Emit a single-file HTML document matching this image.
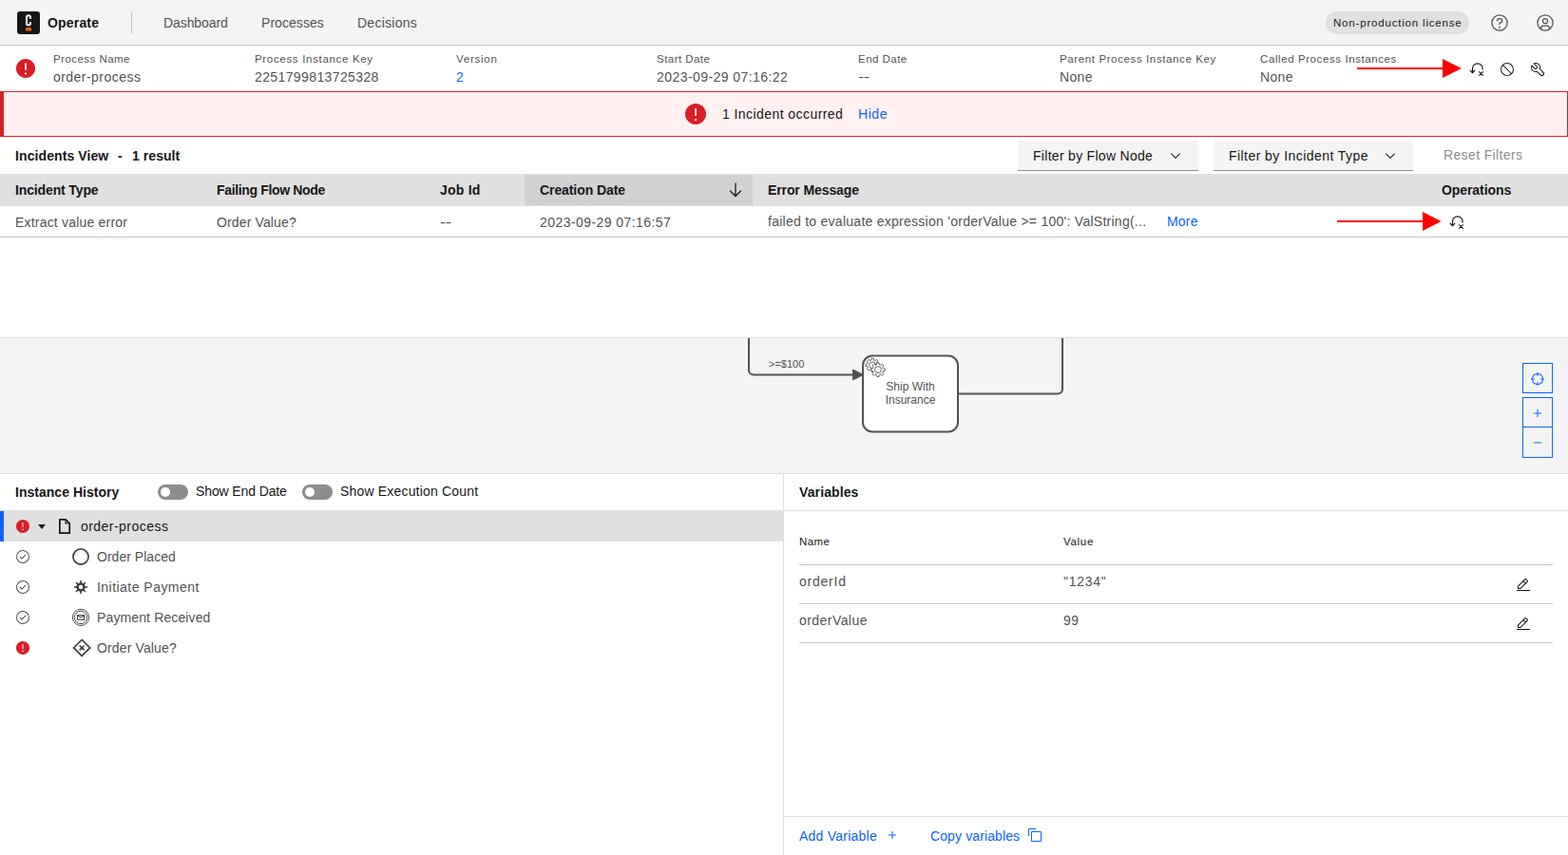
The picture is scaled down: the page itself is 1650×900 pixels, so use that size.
<!DOCTYPE html>
<html lang="en">
<head>
<meta charset="utf-8">
<title>Operate: Process Instance 2251799813725328 of order-process</title>
<style>
*{box-sizing:border-box;margin:0;padding:0}
html,body{width:1650px;height:900px;overflow:hidden;background:#fff}
body{font-family:"Liberation Sans",sans-serif;font-size:14px;color:#161616;position:relative;-webkit-font-smoothing:antialiased}
.abs{position:absolute}
svg{display:block}
a{color:#0f62fe;text-decoration:none}
.t{position:absolute;white-space:nowrap;line-height:18px;font-size:14px}
.b{font-weight:700}
.s{color:#525252}
.l{font-size:11.5px;line-height:16px;color:#525252}
.lk{color:#0f62fe}
/* header */
#hdr{left:0;top:0;width:1650px;height:48px;background:#f4f4f4;border-bottom:1px solid #c6c6c6}
#logo{left:18px;top:12px;width:24px;height:24px}
#hdiv{left:138px;top:12px;width:1px;height:24px;background:#c6c6c6}
#tag{left:1395px;top:12px;width:151px;height:24px;border-radius:12px;background:#e0e0e0}
/* instance header */
#ih{left:0;top:48px;width:1650px;height:48px;background:#fff}
/* banner */
#ban{left:0;top:96px;width:1650px;height:48px;background:#fff1f1;border:1px solid #da1e28;border-left-width:4px}
/* incidents */
.dd{top:148px;height:32px;background:#f4f4f4;border-bottom:1px solid #8d8d8d}
#th{left:0;top:183px;width:1650px;height:34px;background:#e0e0e0}
#ths{left:552px;top:184px;width:240px;height:32px;background:#d1d1d1}
#trb{left:0;top:249px;width:1650px;height:1px;background:#c6c6c6}
/* diagram */
#dg{left:0;top:355px;width:1650px;height:143px;background:#f4f4f4;border-top:1px solid #e0e0e0;overflow:hidden}
.zb{left:1602px;width:32px;height:32px;border:1px solid #0f62fe;background:#f4f4f4}
/* bottom */
#bot{left:0;top:498px;width:1650px;height:402px;background:#fff;border-top:1px solid #e0e0e0}
#vsep{left:824px;top:498px;width:1px;height:402px;background:#e0e0e0}
#sel{left:0;top:537px;width:824px;height:33px;background:#e0e0e0}
#selb{left:0;top:538px;width:4px;height:32px;background:#0f62fe}
.hl{height:1px;background:#e0e0e0}
.rl{left:841px;width:793px;height:1px;background:#c6c6c6}
.tg{top:510px;width:32px;height:16px;border-radius:8px;background:#8d8d8d}
.tg i{position:absolute;left:3px;top:3px;width:10px;height:10px;border-radius:5px;background:#fff}

.ic{position:absolute;display:block}
.d{fill:#161616}
.g{fill:#525252}
.r{fill:#da1e28}
.bl{fill:#0f62fe}
</style>
</head>
<body>
<header>
<div id="hdr" class="abs"></div>
<svg id="logo" class="abs" viewBox="0 0 24 24"><rect width="24" height="24" rx="3.2" fill="#161616"/><path d="M14 7.9V6.2a2 2 0 0 0-4 0v6.4a2 2 0 0 0 4 0V10.9" fill="none" stroke="#fff" stroke-width="1.9"/><rect x="9" y="17.1" width="6" height="3.4" fill="#fc5d0d"/></svg>
<div class="t b h" style="left:50px;top:15px;letter-spacing:0.18px">Operate</div>
<div id="hdiv" class="abs"></div>
<div class="t s h" style="left:172px;top:15px;letter-spacing:-0.088px">Dashboard</div>
<div class="t s h" style="left:275px;top:15px;letter-spacing:0.055px">Processes</div>
<div class="t s h" style="left:376px;top:15px;letter-spacing:0.262px">Decisions</div>
<div id="tag" class="abs"></div>
<div class="t" style="left:1403px;top:16px;font-size:11.5px;line-height:16px;letter-spacing:0.814px">Non-production license</div>

<svg class="ic g" style="left:1568px;top:14px" width="20" height="20" viewBox="0 0 32 32"><path d="M16,2A14,14,0,1,0,30,16,14,14,0,0,0,16,2Zm0,26A12,12,0,1,1,28,16,12,12,0,0,1,16,28Z"/><circle cx="16" cy="23.5" r="1.5"/><path d="M17,8H15.5A4.49,4.49,0,0,0,11,12.5V13h2v-.5A2.5,2.5,0,0,1,15.5,10H17a2.5,2.5,0,0,1,0,5H15v4.5h2V17a4.5,4.5,0,0,0,0-9Z"/></svg>
<svg class="ic g" style="left:1616px;top:14px" width="20" height="20" viewBox="0 0 32 32"><path d="M16,8a5,5,0,1,0,5,5A5,5,0,0,0,16,8Zm0,8a3,3,0,1,1,3-3A3.0034,3.0034,0,0,1,16,16Z"/><path d="M16,2A14,14,0,1,0,30,16,14.0158,14.0158,0,0,0,16,2ZM10,26.3765V25a3.0033,3.0033,0,0,1,3-3h6a3.0033,3.0033,0,0,1,3,3v1.3765a11.8989,11.8989,0,0,1-12,0Zm13.9925-1.4507A5.0016,5.0016,0,0,0,19,20H13a5.0016,5.0016,0,0,0-4.9925,4.9258,12,12,0,1,1,15.985,0Z"/></svg>

</header>
<main>
<section id="instance-header">
<div id="ih" class="abs"></div>
<div class="t l" style="left:56px;top:54px;letter-spacing:0.463px">Process Name</div>
<div class="t s" style="left:56px;top:72px;letter-spacing:0.462px">order-process</div>
<div class="t l" style="left:268px;top:54px;letter-spacing:0.676px">Process Instance Key</div>
<div class="t s" style="left:268px;top:72px;letter-spacing:0.388px">2251799813725328</div>
<div class="t l" style="left:480px;top:54px;letter-spacing:0.76px">Version</div>
<div class="t lk" style="left:480px;top:72px">2</div>
<div class="t l" style="left:691px;top:54px;letter-spacing:0.455px">Start Date</div>
<div class="t s" style="left:691px;top:72px;letter-spacing:0.438px">2023-09-29 07:16:22</div>
<div class="t l" style="left:903px;top:54px;letter-spacing:0.47px">End Date</div>
<div class="t s nofit" style="left:903px;top:72px;transform:scaleX(1.3);transform-origin:0 0">--</div>
<div class="t l" style="left:1115px;top:54px;letter-spacing:0.616px">Parent Process Instance Key</div>
<div class="t s" style="left:1115px;top:72px;letter-spacing:0.337px">None</div>
<div class="t l" style="left:1326px;top:54px;letter-spacing:0.591px">Called Process Instances</div>
<div class="t s" style="left:1326px;top:72px;letter-spacing:0.337px">None</div>

<svg class="ic r" style="left:16px;top:61px" width="22" height="22" viewBox="0 0 24 24"><path d="M12,1C6,1,1,6,1,12s5,11,11,11s11-5,11-11S18,1,12,1z M11.1,6h1.8v8h-1.8V6z M12,19.2c-0.7,0-1.2-0.6-1.2-1.2s0.6-1.2,1.2-1.2s1.2,0.6,1.2,1.2S12.7,19.2,12,19.2z"/></svg>
<svg class="ic" style="left:1428px;top:62px" width="110" height="20" viewBox="0 0 110 20"><path d="M0 10H90" stroke="#ff0000" stroke-width="2" fill="none"/><path d="M90 0L110 10L90 20Z" fill="#ff0000"/></svg>
<svg class="ic d" style="left:1546px;top:65px" width="16" height="16" viewBox="0 0 16 16"><path d="M3.5 11.6V7.2a5.3 5.3 0 0 1 10.6 0V8.6" fill="none" stroke="#161616" stroke-width="1.15"/><path d="M0.9 9L3.5 11.6 6.1 9M10.3 10.3l4.4 4.4M14.7 10.3l-4.4 4.4" fill="none" stroke="#161616" stroke-width="1.15"/></svg>
<svg class="ic d" style="left:1578px;top:65px" width="16" height="16" viewBox="0 0 32 32"><path d="M2,16H2A14,14,0,1,0,16,2,14,14,0,0,0,2,16Zm23.15,7.75L8.25,6.85a12,12,0,0,1,16.9,16.9ZM8.24,25.16A12,12,0,0,1,6.84,8.27L23.73,25.16a12,12,0,0,1-15.49,0Z"/></svg>
<svg class="ic d" style="left:1610px;top:65px" width="16" height="16" viewBox="0 0 32 32"><path d="M12.1,2A9.8,9.8,0,0,0,6.7,3.6L13.1,10a2.1,2.1,0,0,1,.2,3,2.1,2.1,0,0,1-3-.2L3.7,6.4A9.84,9.84,0,0,0,2,12.1,10.14,10.14,0,0,0,12.1,22.2a10.9,10.9,0,0,0,2.6-.3l6.7,6.7a5,5,0,0,0,7.1-7.1l-6.7-6.7a10.9,10.9,0,0,0,.3-2.6A10,10,0,0,0,12.1,2Zm8,10.1a7.61,7.61,0,0,1-.3,2.1l-.3,1.1.8.8,6.7,6.7a2.88,2.88,0,0,1,.9,2.1A2.72,2.72,0,0,1,27,27a2.9,2.9,0,0,1-4.2,0l-6.7-6.7-.8-.8-1.1.3a7.61,7.61,0,0,1-2.1.3,8.27,8.27,0,0,1-5.7-2.3A7.63,7.63,0,0,1,4,12.1a8.33,8.33,0,0,1,.3-2.2l4.4,4.4a4.14,4.14,0,0,0,5.9.2,4.14,4.14,0,0,0-.2-5.9L10,4.2a6.45,6.45,0,0,1,2-.3,8.27,8.27,0,0,1,5.7,2.3A8.49,8.49,0,0,1,20.1,12.1Z"/></svg>

</section>
<section id="incident-banner">
<div id="ban" class="abs"></div>
<div class="t" style="left:760px;top:111px;letter-spacing:0.433px">1 Incident occurred</div>
<div class="t lk" style="left:903px;top:111px;letter-spacing:0.561px">Hide</div>

<svg class="ic r" style="left:720px;top:108px" width="24" height="24" viewBox="0 0 24 24"><path d="M12,1C6,1,1,6,1,12s5,11,11,11s11-5,11-11S18,1,12,1z M11.1,6h1.8v8h-1.8V6z M12,19.2c-0.7,0-1.2-0.6-1.2-1.2s0.6-1.2,1.2-1.2s1.2,0.6,1.2,1.2S12.7,19.2,12,19.2z"/></svg>

</section>
<section id="incidents">
<div class="t b" style="left:16px;top:155px;letter-spacing:0.092px">Incidents View</div>
<div class="t b nofit" style="left:124px;top:155px">-</div>
<div class="t b" style="left:139px;top:155px;letter-spacing:0.055px">1 result</div>
<div class="abs dd" style="left:1071px;width:190px"></div>
<div class="t" style="left:1087px;top:155px;letter-spacing:0.294px">Filter by Flow Node</div>
<div class="abs dd" style="left:1277px;width:210px"></div>
<div class="t" style="left:1293px;top:155px;letter-spacing:0.446px">Filter by Incident Type</div>
<div class="t" style="left:1519px;top:154px;color:#8d8d8d;letter-spacing:0.362px">Reset Filters</div>
<div id="th" class="abs"></div>
<div id="ths" class="abs"></div>
<div class="t b" style="left:16px;top:191px;letter-spacing:-0.134px">Incident Type</div>
<div class="t b" style="left:228px;top:191px;letter-spacing:-0.349px">Failing Flow Node</div>
<div class="t b" style="left:463px;top:191px;letter-spacing:0.233px">Job Id</div>
<div class="t b" style="left:568px;top:191px;letter-spacing:-0.086px">Creation Date</div>
<div class="t b" style="left:808px;top:191px;letter-spacing:-0.107px">Error Message</div>
<div class="t b" style="left:1517px;top:191px;letter-spacing:-0.078px">Operations</div>
<div class="t s" style="left:16px;top:225px;letter-spacing:0.195px">Extract value error</div>
<div class="t s" style="left:228px;top:225px;letter-spacing:0.139px">Order Value?</div>
<div class="t s nofit" style="left:463px;top:225px;transform:scaleX(1.3);transform-origin:0 0">--</div>
<div class="t s" style="left:568px;top:225px;letter-spacing:0.438px">2023-09-29 07:16:57</div>
<div class="t s" style="left:808px;top:224px;letter-spacing:0.263px">failed to evaluate expression 'orderValue &gt;= 100': ValString(...</div>
<div class="t lk" style="left:1228px;top:224px;letter-spacing:0.191px">More</div>
<div id="trb" class="abs"></div>

<svg class="ic d" style="left:1229px;top:156px" width="16" height="16" viewBox="0 0 16 16"><path d="M8 11L3 6 3.7 5.3 8 9.6 12.3 5.3 13 6z"/></svg>
<svg class="ic d" style="left:1455px;top:156px" width="16" height="16" viewBox="0 0 16 16"><path d="M8 11L3 6 3.7 5.3 8 9.6 12.3 5.3 13 6z"/></svg>
<svg class="ic d" style="left:764px;top:190px" width="20" height="20" viewBox="0 0 32 32"><path d="M24.59 16.59L17 24.17 17 4 15 4 15 24.17 7.41 16.59 6 18 16 28 26 18 24.59 16.59z"/></svg>
<svg class="ic" style="left:1407px;top:223px" width="110" height="20" viewBox="0 0 110 20"><path d="M0 10H90" stroke="#ff0000" stroke-width="2" fill="none"/><path d="M90 0L109.6 10L90 20Z" fill="#ff0000"/></svg>
<svg class="ic d" style="left:1525px;top:226px" width="16" height="16" viewBox="0 0 16 16"><path d="M3.5 11.6V7.2a5.3 5.3 0 0 1 10.6 0V8.6" fill="none" stroke="#161616" stroke-width="1.15"/><path d="M0.9 9L3.5 11.6 6.1 9M10.3 10.3l4.4 4.4M14.7 10.3l-4.4 4.4" fill="none" stroke="#161616" stroke-width="1.15"/></svg>

</section>
<section id="diagram">
<div id="dg" class="abs"></div>
<svg class="ic" style="left:0;top:356px" width="1650" height="142" viewBox="0 356 1650 142">
<g fill="none" stroke="#525252" stroke-width="2" stroke-linejoin="round">
<path d="M788 350V389.5a5 5 0 0 0 5 5H898"/>
<path d="M1009 414.5H1113a5 5 0 0 0 5-5V350"/>
</g>
<path d="M897.5 389L908.5 394.5L897.5 400Z" fill="#525252" stroke="#525252" stroke-width="1" stroke-linejoin="round"/>
<rect x="908" y="374.5" width="100" height="80" rx="10" fill="#fff" stroke="#525252" stroke-width="2"/>
<g fill="#fff" stroke="#525252" stroke-width="0.9" stroke-linejoin="round">
<path d="M925.32 383.23L925.32 385.37L923.54 385.63L922.91 387.14L923.99 388.58L922.48 390.09L921.04 389.01L919.53 389.64L919.27 391.42L917.13 391.42L916.87 389.64L915.36 389.01L913.92 390.09L912.41 388.58L913.49 387.14L912.86 385.63L911.08 385.37L911.08 383.23L912.86 382.97L913.49 381.46L912.41 380.02L913.92 378.51L915.36 379.59L916.87 378.96L917.13 377.18L919.27 377.18L919.53 378.96L921.04 379.59L922.48 378.51L923.99 380.02L922.91 381.46L923.54 382.97Z"/>
<circle cx="918.2" cy="384.3" r="3.5"/>
<path d="M931.22 388.10L931.22 390.30L929.33 390.55L928.70 392.09L929.85 393.60L928.30 395.15L926.79 394.00L925.25 394.63L925.00 396.52L922.80 396.52L922.55 394.63L921.01 394.00L919.50 395.15L917.95 393.60L919.10 392.09L918.47 390.55L916.58 390.30L916.58 388.10L918.47 387.85L919.10 386.31L917.95 384.80L919.50 383.25L921.01 384.40L922.55 383.77L922.80 381.88L925.00 381.88L925.25 383.77L926.79 384.40L928.30 383.25L929.85 384.80L928.70 386.31L929.33 387.85Z"/>
<circle cx="923.9" cy="389.2" r="3.5"/>
</g>
<text x="809" y="387" font-family="'Liberation Sans',Arial,sans-serif" font-size="11" fill="#525252">&gt;=$100</text>
<text x="958" y="411" text-anchor="middle" font-family="'Liberation Sans',Arial,sans-serif" font-size="12" fill="#525252">Ship With</text>
<text x="958" y="425" text-anchor="middle" font-family="'Liberation Sans',Arial,sans-serif" font-size="12" fill="#525252">Insurance</text>
</svg>
<div class="abs zb" style="top:382px"></div>
<div class="abs zb" style="top:418px;height:64px"></div>
<div class="abs" style="left:1602px;top:449px;width:32px;height:1px;background:#0f62fe"></div>
<svg class="ic bl" style="left:1610px;top:391px" width="16" height="16" viewBox="0 0 32 32"><path d="M30 15H27.9492A12.0071 12.0071 0 0017 4.0508V2H15V4.0508A12.0071 12.0071 0 004.0508 15H2v2H4.0508A12.0071 12.0071 0 0015 27.9492V30h2V27.9492A12.0071 12.0071 0 0027.9492 17H30zM17 25.9492V22H15v3.9492A10.0166 10.0166 0 016.0508 17H10V15H6.0508A10.0166 10.0166 0 0115 6.0508V10h2V6.0508A10.0166 10.0166 0 0125.9492 15H22v2h3.9492A10.0166 10.0166 0 0117 25.9492z"/></svg>
<svg class="ic bl" style="left:1610px;top:427px" width="16" height="16" viewBox="0 0 32 32"><path d="M17 15L17 8 15 8 15 15 8 15 8 17 15 17 15 24 17 24 17 17 24 17 24 15z"/></svg>
<svg class="ic bl" style="left:1610px;top:458px" width="16" height="16" viewBox="0 0 32 32"><path d="M8 15H24V17H8z"/></svg>

</section>
<section id="bottom-panel">
<div id="bot" class="abs"></div>
<div id="vsep" class="abs"></div>
<div class="t b" style="left:16px;top:509px;letter-spacing:0.024px">Instance History</div>
<div class="abs tg" style="left:166px"><i></i></div>
<div class="t" style="left:206px;top:508px;letter-spacing:-0.115px">Show End Date</div>
<div class="abs tg" style="left:318px"><i></i></div>
<div class="t" style="left:358px;top:508px;letter-spacing:0.179px">Show Execution Count</div>
<div id="sel" class="abs"></div>
<div id="selb" class="abs"></div>
<svg class="ic r" style="left:16px;top:546px" width="16" height="16" viewBox="0 0 16 16"><path d="M8,1C4.2,1,1,4.2,1,8s3.2,7,7,7s7-3.1,7-7S11.9,1,8,1z M7.5,4h1v5h-1V4z M8,12.2c-0.4,0-0.8-0.4-0.8-0.8s0.3-0.8,0.8-0.8c0.4,0,0.8,0.4,0.8,0.8S8.4,12.2,8,12.2z"/></svg>
<svg class="ic d" style="left:40px;top:552px" width="8" height="5" viewBox="0 0 8 5"><path d="M0 0H8L4 5Z"/></svg>
<svg class="ic" style="left:60px;top:544px" width="16" height="20" viewBox="0 0 16 20" fill="none" stroke="#161616" stroke-width="1.7"><path d="M2.85 2.85H9.1L13.25 7V17.1H2.85Z"/><path d="M9.1 2.85V7H13.25" stroke-width="1.2"/></svg>
<svg class="ic g" style="left:16px;top:578px" width="16" height="16" viewBox="0 0 32 32"><path d="M14 21.414L9 16.413 10.413 15 14 18.586 21.585 11 23 12.415 14 21.414z"/><path d="M16,2A14,14,0,1,0,30,16,14,14,0,0,0,16,2Zm0,26A12,12,0,1,1,28,16,12,12,0,0,1,16,28Z"/></svg>
<svg class="ic" style="left:75px;top:576px" width="20" height="20" viewBox="0 0 20 20"><circle cx="10" cy="10" r="8.05" fill="none" stroke="#404040" stroke-width="1.7"/></svg>
<svg class="ic g" style="left:16px;top:610px" width="16" height="16" viewBox="0 0 32 32"><path d="M14 21.414L9 16.413 10.413 15 14 18.586 21.585 11 23 12.415 14 21.414z"/><path d="M16,2A14,14,0,1,0,30,16,14,14,0,0,0,16,2Zm0,26A12,12,0,1,1,28,16,12,12,0,0,1,16,28Z"/></svg>
<svg class="ic" style="left:77px;top:610px" width="16" height="16" viewBox="0 0 16 16"><path d="M15.06 7.28L15.06 8.72L12.63 8.81L11.85 10.70L13.51 12.48L12.48 13.51L10.70 11.85L8.81 12.63L8.72 15.06L7.28 15.06L7.19 12.63L5.30 11.85L3.52 13.51L2.49 12.48L4.15 10.70L3.37 8.81L0.94 8.72L0.94 7.28L3.37 7.19L4.15 5.30L2.49 3.52L3.52 2.49L5.30 4.15L7.19 3.37L7.28 0.94L8.72 0.94L8.81 3.37L10.70 4.15L12.48 2.49L13.51 3.52L11.85 5.30L12.63 7.19ZM8 5.7a2.3 2.3 0 1 0 0 4.6a2.3 2.3 0 1 0 0-4.6Z" fill="#393939" fill-rule="evenodd"/></svg>
<svg class="ic g" style="left:16px;top:642px" width="16" height="16" viewBox="0 0 32 32"><path d="M14 21.414L9 16.413 10.413 15 14 18.586 21.585 11 23 12.415 14 21.414z"/><path d="M16,2A14,14,0,1,0,30,16,14,14,0,0,0,16,2Zm0,26A12,12,0,1,1,28,16,12,12,0,0,1,16,28Z"/></svg>
<svg class="ic" style="left:75px;top:640px" width="20" height="20" viewBox="0 0 20 20" fill="none" stroke="#393939"><circle cx="10" cy="9.9" r="8.6" stroke-width="0.9"/><circle cx="10" cy="9.9" r="6.7" stroke-width="0.9"/><rect x="6.5" y="7.7" width="7" height="4.6" stroke-width="1.1"/><path d="M6.7 8L10 10.2L13.3 8" stroke-width="1"/></svg>
<svg class="ic r" style="left:16px;top:674px" width="16" height="16" viewBox="0 0 16 16"><path d="M8,1C4.2,1,1,4.2,1,8s3.2,7,7,7s7-3.1,7-7S11.9,1,8,1z M7.5,4h1v5h-1V4z M8,12.2c-0.4,0-0.8-0.4-0.8-0.8s0.3-0.8,0.8-0.8c0.4,0,0.8,0.4,0.8,0.8S8.4,12.2,8,12.2z"/></svg>
<svg class="ic" style="left:76px;top:672px" width="20" height="20" viewBox="0 0 20 20" fill="none" stroke="#393939"><path d="M10.1 1.4L18.7 9.9L10.1 18.4L1.6 9.9Z" stroke-width="1.8" stroke="#454545"/><path d="M7.6 7.5L12.6 12.3M12.6 7.5L7.6 12.3" stroke-width="1.6"/></svg>
<div class="t" style="left:85px;top:545px;letter-spacing:0.462px">order-process</div>
<div class="t s" style="left:102px;top:577px;letter-spacing:0.025px">Order Placed</div>
<div class="t s" style="left:102px;top:609px;letter-spacing:0.467px">Initiate Payment</div>
<div class="t s" style="left:102px;top:641px;letter-spacing:0.126px">Payment Received</div>
<div class="t s" style="left:102px;top:673px;letter-spacing:0.139px">Order Value?</div>

<div class="t b" style="left:841px;top:509px;letter-spacing:0.112px">Variables</div>
<div class="abs hl" style="left:825px;top:537px;width:825px"></div>
<div class="t" style="left:841px;top:562px;font-size:11.5px;line-height:16px;letter-spacing:0.424px">Name</div>
<div class="t" style="left:1119px;top:562px;font-size:11.5px;line-height:16px;letter-spacing:0.679px">Value</div>
<div class="abs rl" style="top:594px"></div>
<div class="t s" style="left:841px;top:603px;letter-spacing:0.767px">orderId</div>
<div class="t s" style="left:1119px;top:603px;letter-spacing:0.741px">"1234"</div>
<div class="abs rl" style="top:635px"></div>
<div class="t s" style="left:841px;top:644px;letter-spacing:0.443px">orderValue</div>
<div class="t s" style="left:1119px;top:644px;letter-spacing:0.582px">99</div>
<div class="abs rl" style="top:676px"></div>
<div class="abs hl" style="left:825px;top:859px;width:825px"></div>
<div class="t lk" style="left:841px;top:871px;letter-spacing:0.238px">Add Variable</div>
<div class="t lk" style="left:979px;top:871px;letter-spacing:0.113px">Copy variables</div>
<svg class="ic d" style="left:1595px;top:608px" width="16" height="16" viewBox="0 0 32 32"><path d="M2 26H30V28H2zM25.4 9c.8-.8.8-2 0-2.8 0 0 0 0 0 0l-3.6-3.6c-.8-.8-2-.8-2.8 0 0 0 0 0 0 0l-15 15V24h6.4L25.4 9zM20.4 4L24 7.6l-3 3L17.4 7 20.4 4zM6 22v-3.6l10-10 3.6 3.6-10 10H6z"/></svg>
<svg class="ic d" style="left:1595px;top:649px" width="16" height="16" viewBox="0 0 32 32"><path d="M2 26H30V28H2zM25.4 9c.8-.8.8-2 0-2.8 0 0 0 0 0 0l-3.6-3.6c-.8-.8-2-.8-2.8 0 0 0 0 0 0 0l-15 15V24h6.4L25.4 9zM20.4 4L24 7.6l-3 3L17.4 7 20.4 4zM6 22v-3.6l10-10 3.6 3.6-10 10H6z"/></svg>
<svg class="ic bl" style="left:931px;top:871px" width="16" height="16" viewBox="0 0 32 32"><path d="M17 15L17 8 15 8 15 15 8 15 8 17 15 17 15 24 17 24 17 17 24 17 24 15z"/></svg>
<svg class="ic bl" style="left:1081px;top:871px" width="16" height="16" viewBox="0 0 32 32"><path d="M28,10V28H10V10H28m0-2H10a2,2,0,0,0-2,2V28a2,2,0,0,0,2,2H28a2,2,0,0,0,2-2V10a2,2,0,0,0-2-2Z"/><path d="M4,18H2V4A2,2,0,0,1,4,2H18V4H4Z"/></svg>
</section>
</main>
</body>
</html>
